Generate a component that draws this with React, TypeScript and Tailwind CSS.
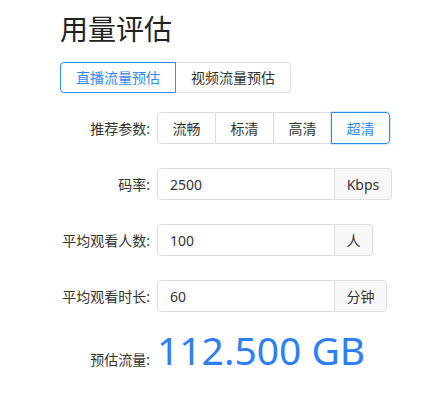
import { useState } from "react";

const font = "font-['Segoe_UI','Noto_Sans','Noto_Sans_CJK_SC',sans-serif]";

function Row({ label, children }: { label: string; children: React.ReactNode }) {
  return (
    <div className="flex items-center h-8">
      <label className="w-[97px] shrink-0 pr-[7px] text-right text-[14px] text-[#333]">{label}</label>
      {children}
    </div>
  );
}

function UnitInput({ value, unit, unitW }: { value: string; unit: string; unitW: string }) {
  return (
    <div className="flex h-8 text-[14px] text-[#333]">
      <div className="w-[178px] border border-[#dcdee2] rounded-l flex items-center pl-3">{value}</div>
      <div className={`${unitW} -ml-px border border-[#dcdee2] rounded-r bg-[#f8f8f9] flex items-center justify-center`}>
        {unit}
      </div>
    </div>
  );
}

export default function App() {
  const [tab, setTab] = useState(0);
  const [preset, setPreset] = useState(3);
  const presets = ["流畅", "标清", "高清", "超清"];
  return (
    <div className={`${font} bg-white w-[447px] h-[410px] pl-[60px] pt-[9px]`}>
      <h1 className="text-[28px] leading-[40px] text-[#222]">用量评估</h1>
      <div className="flex mt-[13px] text-[14px]">
        {["直播流量预估", "视频流量预估"].map((t, i) => (
          <button
            key={t}
            onClick={() => setTab(i)}
            className={`h-[31px] px-[15px] border ${i === 0 ? "rounded-l" : "rounded-r -ml-px"} ${
              tab === i ? "border-[#2d8cf0] text-[#2d8cf0] z-10" : "border-[#dcdee2] text-[#333]"
            }`}
          >
            {t}
          </button>
        ))}
      </div>
      <div className="flex flex-col gap-6 mt-[19px]">
        <Row label="推荐参数:">
          <div className="flex text-[14px]">
            {presets.map((p, i) => (
              <button
                key={p}
                onClick={() => setPreset(i)}
                className={`relative w-[59px] h-8 border ${i > 0 ? "-ml-px" : ""} ${
                  i === 0 ? "rounded-l" : i === 3 ? "rounded-r" : ""
                } ${
                  preset === i
                    ? "border-[#2d8cf0] text-[#2d8cf0] z-10 shadow-[0_0_0_1px_rgba(45,140,240,0.2)]"
                    : "border-[#dcdee2] text-[#333]"
                }`}
              >
                {p}
              </button>
            ))}
          </div>
        </Row>
        <Row label="码率:">
          <UnitInput value="2500" unit="Kbps" unitW="w-[58px]" />
        </Row>
        <Row label="平均观看人数:">
          <UnitInput value="100" unit="人" unitW="w-[39px]" />
        </Row>
        <Row label="平均观看时长:">
          <UnitInput value="60" unit="分钟" unitW="w-[53px]" />
        </Row>
        <div className="flex items-baseline -mt-[10px]">
          <span className="w-[97px] shrink-0 pr-[7px] text-right text-[14px] text-[#333]">预估流量:</span>
          <span className="text-[39px] leading-[48px] text-[#2d7ef7]">112.500 GB</span>
        </div>
      </div>
    </div>
  );
}
